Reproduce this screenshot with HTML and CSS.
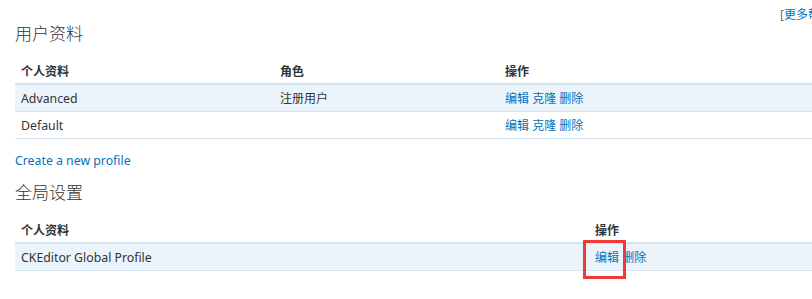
FILE: index.html
```html
<!DOCTYPE html>
<html lang="zh-CN">
<head>
<meta charset="utf-8">
<link rel="stylesheet" href="styles.css">
</head>
<body>
<div class="page">
  <div class="help-row"><a class="help" href="#"><span class="bracket">[</span>更多帮助<span class="bracket">]</span></a></div>
  <h2 class="title">用户资料</h2>
  <table class="grid grid-user">
    <thead>
      <tr><th class="c1">个人资料</th><th class="c2">角色</th><th>操作</th></tr>
    </thead>
    <tbody>
      <tr class="odd"><td class="latin">Advanced</td><td>注册用户</td><td class="ops"><a href="#">编辑</a> <a href="#">克隆</a> <a href="#">删除</a></td></tr>
      <tr><td class="latin">Default</td><td></td><td class="ops"><a href="#">编辑</a> <a href="#">克隆</a> <a href="#">删除</a></td></tr>
    </tbody>
  </table>
  <p class="create"><a href="#">Create a new profile</a></p>
  <h2 class="title title-2">全局设置</h2>
  <table class="grid grid-global">
    <thead>
      <tr><th class="g1">个人资料</th><th>操作</th></tr>
    </thead>
    <tbody>
      <tr class="odd"><td class="latin">CKEditor Global Profile</td><td class="ops"><span class="mark"><a href="#">编辑</a></span> <a href="#">删除</a></td></tr>
    </tbody>
  </table>
</div>
</body>
</html>
```
FILE: styles.css
```css
html {
  overflow: hidden;
}
html, body {
  margin: 0;
  padding: 0;
  background: #fff;
}
body {
  font-family: "Noto Sans", "Noto Sans CJK SC", sans-serif;
  font-size: 12px;
  color: #333;
}
a {
  color: #0074bd;
  text-decoration: none;
}
.page {
  width: 900px;
  padding-left: 15px;
  padding-bottom: 28px;
}
.help-row {
  display: flex;
  justify-content: flex-start;
  padding-left: 765px;
  height: 21px;
  padding-top: 6px;
  box-sizing: border-box;
  line-height: 18px;
}
.help .bracket {
  color: #8a6a4a;
}
.title {
  margin: 0;
  font-weight: 300;
  font-size: 17px;
  line-height: 24px;
  color: #333;
  height: 33px;
  font-family: "Noto Sans CJK SC", sans-serif;
}
.grid {
  width: 100%;
  border-collapse: collapse;
  margin-top: 4px;
}
.grid th {
  text-align: left;
  font-weight: bold;
  font-size: 12px;
  padding: 0 6px;
  height: 25px;
  border-bottom: 2px solid #d3e3f2;
  font-family: "Noto Sans CJK SC", sans-serif;
  color: #333;
}
.grid td {
  padding: 0 6px;
  height: 26px;
  border-bottom: 1px solid #d3e3f2;
  white-space: nowrap;
}
.grid td.latin {
  font-size: 12.3px;
}
.grid tr.odd td {
  background: #ebf3fb;
}
.grid-user .c1 { width: 247px; }
.grid-user .c2 { width: 213px; }
.grid-global .g1 { width: 562px; }
.ops a {
  font-family: "Noto Sans CJK SC", sans-serif;
}
.create {
  margin: 0;
  height: 41px;
  padding-top: 13px;
  box-sizing: border-box;
  line-height: 18px;
  font-size: 12.3px;
}
.title-2 {
  height: 33px;
}
.mark {
  position: relative;
}
.mark::after {
  content: "";
  position: absolute;
  left: -12px;
  top: -9px;
  width: 37px;
  height: 33px;
  border: 3px solid #f03a3a;
}
```
